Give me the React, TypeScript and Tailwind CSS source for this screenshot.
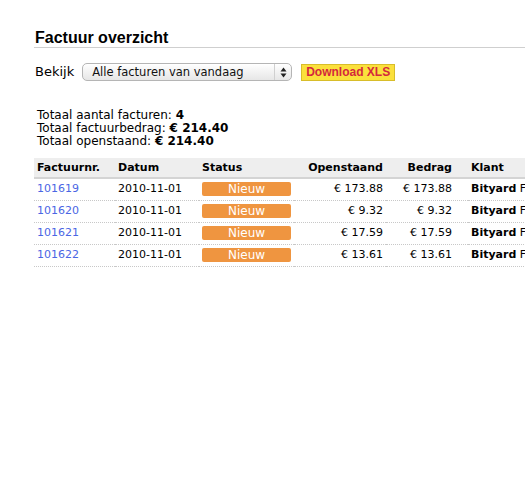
import React from 'react';

const invoices = [
  { nr: '101619', date: '2010-11-01', open: '€ 173.88', amount: '€ 173.88', client: 'Bityard Foundation' },
  { nr: '101620', date: '2010-11-01', open: '€ 9.32', amount: '€ 9.32', client: 'Bityard Foundation' },
  { nr: '101621', date: '2010-11-01', open: '€ 17.59', amount: '€ 17.59', client: 'Bityard Foundation' },
  { nr: '101622', date: '2010-11-01', open: '€ 13.61', amount: '€ 13.61', client: 'Bityard Foundation' },
];

const verdana = "font-['DejaVu_Sans',Verdana,sans-serif]";

const App: React.FC = () => {
  return (
    <div className="w-[525px] h-[485px] overflow-hidden bg-white text-black">
      <div className="ml-[34px] w-[491px]">
        <h2 className="pt-[28px] leading-[19px] text-[16px] font-bold font-['Liberation_Sans',Arial,sans-serif] border-b border-[#cfcfcf] pl-px">
          Factuur overzicht
        </h2>

        {/* filter + export */}
        <div className="mt-[15px] flex items-center h-[18px]">
          <span className={`${verdana} text-[13px] leading-[18px] pl-px`}>Bekijk</span>
          <div className="ml-[8px] w-[210px] h-[18px] flex items-center rounded-[5px] border border-[#b5b5b5] bg-gradient-to-b from-white to-[#e6e6e6] shadow-[inset_0_1px_0_#fff]">
            <span className={`${verdana} flex-1 pl-[9px] text-[11.5px] leading-[16px] text-[#111]`}>Alle facturen van vandaag</span>
            <div className="w-[17px] h-full border-l border-[#d0d0d0] flex items-center justify-center">
              <svg width="7" height="11" viewBox="0 0 7 11">
                <path d="M3.5 0.5 L6.5 4.5 L0.5 4.5 Z" fill="#222" />
                <path d="M3.5 10.5 L6.5 6.5 L0.5 6.5 Z" fill="#222" />
              </svg>
            </div>
          </div>
          <button className="ml-[9px] w-[94px] h-[17px] bg-[#fbe03c] border border-[#d8bd2a] text-[#d4283c] font-bold text-[12px] leading-[15px] font-['Liberation_Sans',Arial,sans-serif]">
            Download XLS
          </button>
        </div>

        {/* totals */}
        <div className={`${verdana} mt-[28px] pl-[3px] text-[12px] leading-[13px]`}>
          <div>Totaal aantal facturen: <b>4</b></div>
          <div>Totaal factuurbedrag: <b>€ 214.40</b></div>
          <div>Totaal openstaand: <b>€ 214.40</b></div>
        </div>

        <table className={`${verdana} mt-[10px] table-fixed w-[700px] border-collapse text-[11px]`}>
          <thead>
            <tr className="bg-[#eeeeee] border-b-2 border-[#d4d4d4] h-[20px] leading-[13px]">
              <th className="w-[81px] px-[3px] text-left font-bold">Factuurnr.</th>
              <th className="w-[84px] px-[3px] text-left font-bold">Datum</th>
              <th className="w-[95px] px-[3px] text-left font-bold">Status</th>
              <th className="w-[92px] px-[3px] text-right font-bold">Openstaand</th>
              <th className="w-[82px] pl-[3px] pr-[16px] text-right font-bold">Bedrag</th>
              <th className="px-[3px] text-left font-bold whitespace-nowrap">Klant</th>
            </tr>
          </thead>
          <tbody>
            {invoices.map((inv) => (
              <tr key={inv.nr} className="h-[22px] border-b border-dotted border-[#c8c8c8]">
                <td className="px-[3px] text-[#4a66e4]">{inv.nr}</td>
                <td className="px-[3px]">{inv.date}</td>
                <td className="px-[3px]">
                  <div className="w-[89px] h-[14px] rounded-[2px] bg-[#ef9540] text-white text-center text-[12px] leading-[14px]">
                    Nieuw
                  </div>
                </td>
                <td className="px-[3px] text-right">{inv.open}</td>
                <td className="pl-[3px] pr-[16px] text-right">{inv.amount}</td>
                <td className="px-[3px] whitespace-nowrap">
                  <b>Bityard</b> Foundation
                </td>
              </tr>
            ))}
          </tbody>
        </table>
      </div>
    </div>
  );
};

export default App;
